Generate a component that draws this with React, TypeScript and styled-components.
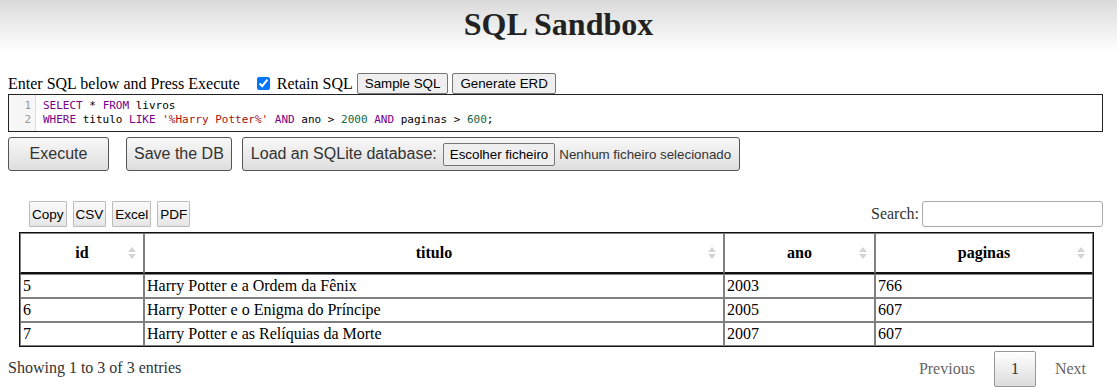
import React from "react";
import styled, { createGlobalStyle } from "styled-components";

const GlobalStyle = createGlobalStyle`
    body {
        margin: 0;
        font-family: "Liberation Serif", "Times New Roman", serif;
        font-size: 16px;
        color: #000;
        background: #fff;
    }
`;

const Header = styled.header`
    height: 52px;
    padding-top: 6px;
    box-sizing: border-box;
    background: linear-gradient(to bottom, #dadada, #ffffff);
`;

const Title = styled.h1`
    margin: 0;
    text-align: center;
    font-size: 32px;
    font-weight: bold;
    color: #222;
`;

const Page = styled.main`
    padding: 0 14px 0 8px;
`;

const ControlRow = styled.div`
    display: flex;
    align-items: center;
    height: 21px;
    margin-top: 21px;
`;

const Label = styled.span`
    font-size: 16px;
    white-space: nowrap;
`;

const Check = styled.input`
    width: 13px;
    height: 13px;
    margin: 0 7px 0 17px;
    accent-color: #0075ff;
`;

const SmallButton = styled.button`
    font-family: "Liberation Sans", Arial, sans-serif;
    font-size: 13.33px;
    height: 21px;
    padding: 0 7px;
    margin-left: 4px;
    background: #efefef;
    border: 1px solid #767676;
    border-radius: 2px;
    color: #000;
`;

const Editor = styled.div`
    display: flex;
    border: 1px solid #222;
    font-family: "DejaVu Sans Mono", "Liberation Mono", monospace;
    font-size: 11px;
`;

const Gutter = styled.div`
    width: 27px;
    padding: 4px 4px 4px 0;
    box-sizing: border-box;
    background: #f7f7f7;
    border-right: 1px solid #ddd;
    color: #999;
    text-align: right;
    line-height: 14px;
`;

const Code = styled.div`
    padding: 4px 0;
    flex: 1;
`;

const Line = styled.div`
    height: 14px;
    line-height: 14px;
    padding: 0 7px;
    white-space: pre;
`;

const Tok = styled.span<{ $kind: "kw" | "str" | "num" }>`
    color: ${(p) => (p.$kind === "kw" ? "#708" : p.$kind === "str" ? "#a11" : "#164")};
`;

const ActionRow = styled.div`
    display: flex;
    align-items: center;
    gap: 10px;
    margin-top: 5px;
`;

const BigButton = styled.button<{ $width?: number }>`
    font-family: "Liberation Sans", Arial, sans-serif;
    font-size: 16px;
    height: 34px;
    ${(p) => (p.$width ? `width: ${p.$width}px;` : "padding: 0 7px;")}
    margin-right: ${(p) => (p.$width ? 7 : 0)}px;
    background: linear-gradient(to bottom, #f8f8f8, #dedede);
    border: 1px solid #555;
    border-radius: 3px;
    color: #333;
    display: flex;
    align-items: center;
    justify-content: center;
    box-sizing: border-box;
    white-space: nowrap;
    flex-shrink: 0;
`;

const LoadBox = styled(BigButton)`
    gap: 6px;
    padding: 0 8px;
    width: 498px;
    justify-content: flex-start;
`;

const FileButton = styled.span`
    font-size: 13.33px;
    height: 21px;
    padding: 0 6px;
    display: inline-flex;
    align-items: center;
    background: #efefef;
    border: 1px solid #767676;
    border-radius: 2px;
    color: #000;
`;

const FileName = styled.span`
    font-size: 13.33px;
    margin-left: -2px;
    color: #333;
`;

const TableTools = styled.div`
    display: flex;
    justify-content: space-between;
    align-items: center;
    margin-top: 30px;
    padding-left: 21px;
`;

const ExportGroup = styled.div`
    display: flex;
    gap: 6px;
`;

const ExportButton = styled.button`
    font-family: "Liberation Sans", Arial, sans-serif;
    font-size: 13.5px;
    height: 26px;
    padding: 0 2px;
    background: linear-gradient(to bottom, #fafafa, #e6e6e6);
    border: 1px solid #bbb;
    border-radius: 1px;
    color: #000;
`;

const SearchLabel = styled.label`
    display: flex;
    align-items: center;
    gap: 3px;
    color: #333;
`;

const SearchInput = styled.input`
    width: 181px;
    height: 26px;
    box-sizing: border-box;
    border: 1px solid #aaa;
    border-radius: 3px;
`;

const Table = styled.table`
    margin: 5px 0 0 11px;
    width: 1073px;
    border-collapse: separate;
    border-spacing: 0;
    border: 1px solid #111;
    table-layout: fixed;
`;

const Th = styled.th<{ $w: number }>`
    position: relative;
    width: ${(p) => p.$w}px;
    height: 41px;
    box-sizing: border-box;
    border: 1px solid #808080;
    border-bottom: 2px solid #111;
    font-weight: bold;
    font-size: 16px;
    text-align: center;
    padding: 0 18px;
`;

const Td = styled.td`
    height: 24px;
    box-sizing: border-box;
    border: 1px solid #808080;
    padding: 0 2px;
    font-size: 16px;
    line-height: 18px;
`;

const SortIcon = styled.svg`
    position: absolute;
    right: 7px;
    top: 50%;
    margin-top: -6px;
`;

const Footer = styled.div`
    display: flex;
    justify-content: space-between;
    align-items: flex-start;
`;

const Info = styled.div`
    padding-top: 12px;
    color: #333;
    line-height: 18px;
`;

const Pager = styled.div`
    display: flex;
    align-items: center;
    padding-top: 4px;
`;

const PageLink = styled.span<{ $current?: boolean }>`
    display: inline-flex;
    align-items: center;
    height: 36px;
    box-sizing: border-box;
    padding: 0 16px;
    margin-left: 2px;
    color: ${(p) => (p.$current ? "#333" : "#666")};
    border: 1px solid ${(p) => (p.$current ? "#979797" : "transparent")};
    border-radius: 2px;
    background: ${(p) => (p.$current ? "linear-gradient(to bottom, #fff, #dcdcdc)" : "none")};
`;

const columns = [
    { name: "id", w: 124 },
    { name: "titulo", w: 580 },
    { name: "ano", w: 151 },
    { name: "paginas", w: 218 },
];

const rows = [
    ["5", "Harry Potter e a Ordem da Fênix", "2003", "766"],
    ["6", "Harry Potter e o Enigma do Príncipe", "2005", "607"],
    ["7", "Harry Potter e as Relíquias da Morte", "2007", "607"],
];

function Sort() {
    return (
        <SortIcon width="8" height="12" viewBox="0 0 8 12">
            <path d="M4 0 L8 5 L0 5 Z" fill="#d4d4d4" />
            <path d="M0 7 L8 7 L4 12 Z" fill="#d4d4d4" />
        </SortIcon>
    );
}

export default function App() {
    return (
        <>
            <GlobalStyle />
            <Header>
                <Title>SQL Sandbox</Title>
            </Header>
            <Page>
                <ControlRow>
                    <Label>Enter SQL below and Press Execute</Label>
                    <Check type="checkbox" defaultChecked />
                    <Label>Retain SQL</Label>
                    <SmallButton>Sample SQL</SmallButton>
                    <SmallButton>Generate ERD</SmallButton>
                </ControlRow>
                <Editor>
                    <Gutter>
                        <div>1</div>
                        <div>2</div>
                    </Gutter>
                    <Code>
                        <Line>
                            <Tok $kind="kw">SELECT</Tok> * <Tok $kind="kw">FROM</Tok> livros
                        </Line>
                        <Line>
                            <Tok $kind="kw">WHERE</Tok> titulo <Tok $kind="kw">LIKE</Tok>{" "}
                            <Tok $kind="str">'%Harry Potter%'</Tok> <Tok $kind="kw">AND</Tok> ano &gt;{" "}
                            <Tok $kind="num">2000</Tok> <Tok $kind="kw">AND</Tok> paginas &gt;{" "}
                            <Tok $kind="num">600</Tok>;
                        </Line>
                    </Code>
                </Editor>
                <ActionRow>
                    <BigButton $width={101}>Execute</BigButton>
                    <BigButton>Save the DB</BigButton>
                    <LoadBox as="label">
                        Load an SQLite database:
                        <FileButton>Escolher ficheiro</FileButton>
                        <FileName>Nenhum ficheiro selecionado</FileName>
                    </LoadBox>
                </ActionRow>
                <TableTools>
                    <ExportGroup>
                        <ExportButton>Copy</ExportButton>
                        <ExportButton>CSV</ExportButton>
                        <ExportButton>Excel</ExportButton>
                        <ExportButton>PDF</ExportButton>
                    </ExportGroup>
                    <SearchLabel>
                        Search:
                        <SearchInput type="search" />
                    </SearchLabel>
                </TableTools>
                <Table>
                    <thead>
                        <tr>
                            {columns.map((c) => (
                                <Th key={c.name} $w={c.w}>
                                    {c.name}
                                    <Sort />
                                </Th>
                            ))}
                        </tr>
                    </thead>
                    <tbody>
                        {rows.map((r) => (
                            <tr key={r[0]}>
                                {r.map((v, i) => (
                                    <Td key={i}>{v}</Td>
                                ))}
                            </tr>
                        ))}
                    </tbody>
                </Table>
                <Footer>
                    <Info>Showing 1 to 3 of 3 entries</Info>
                    <Pager>
                        <PageLink>Previous</PageLink>
                        <PageLink $current>1</PageLink>
                        <PageLink>Next</PageLink>
                    </Pager>
                </Footer>
            </Page>
        </>
    );
}
